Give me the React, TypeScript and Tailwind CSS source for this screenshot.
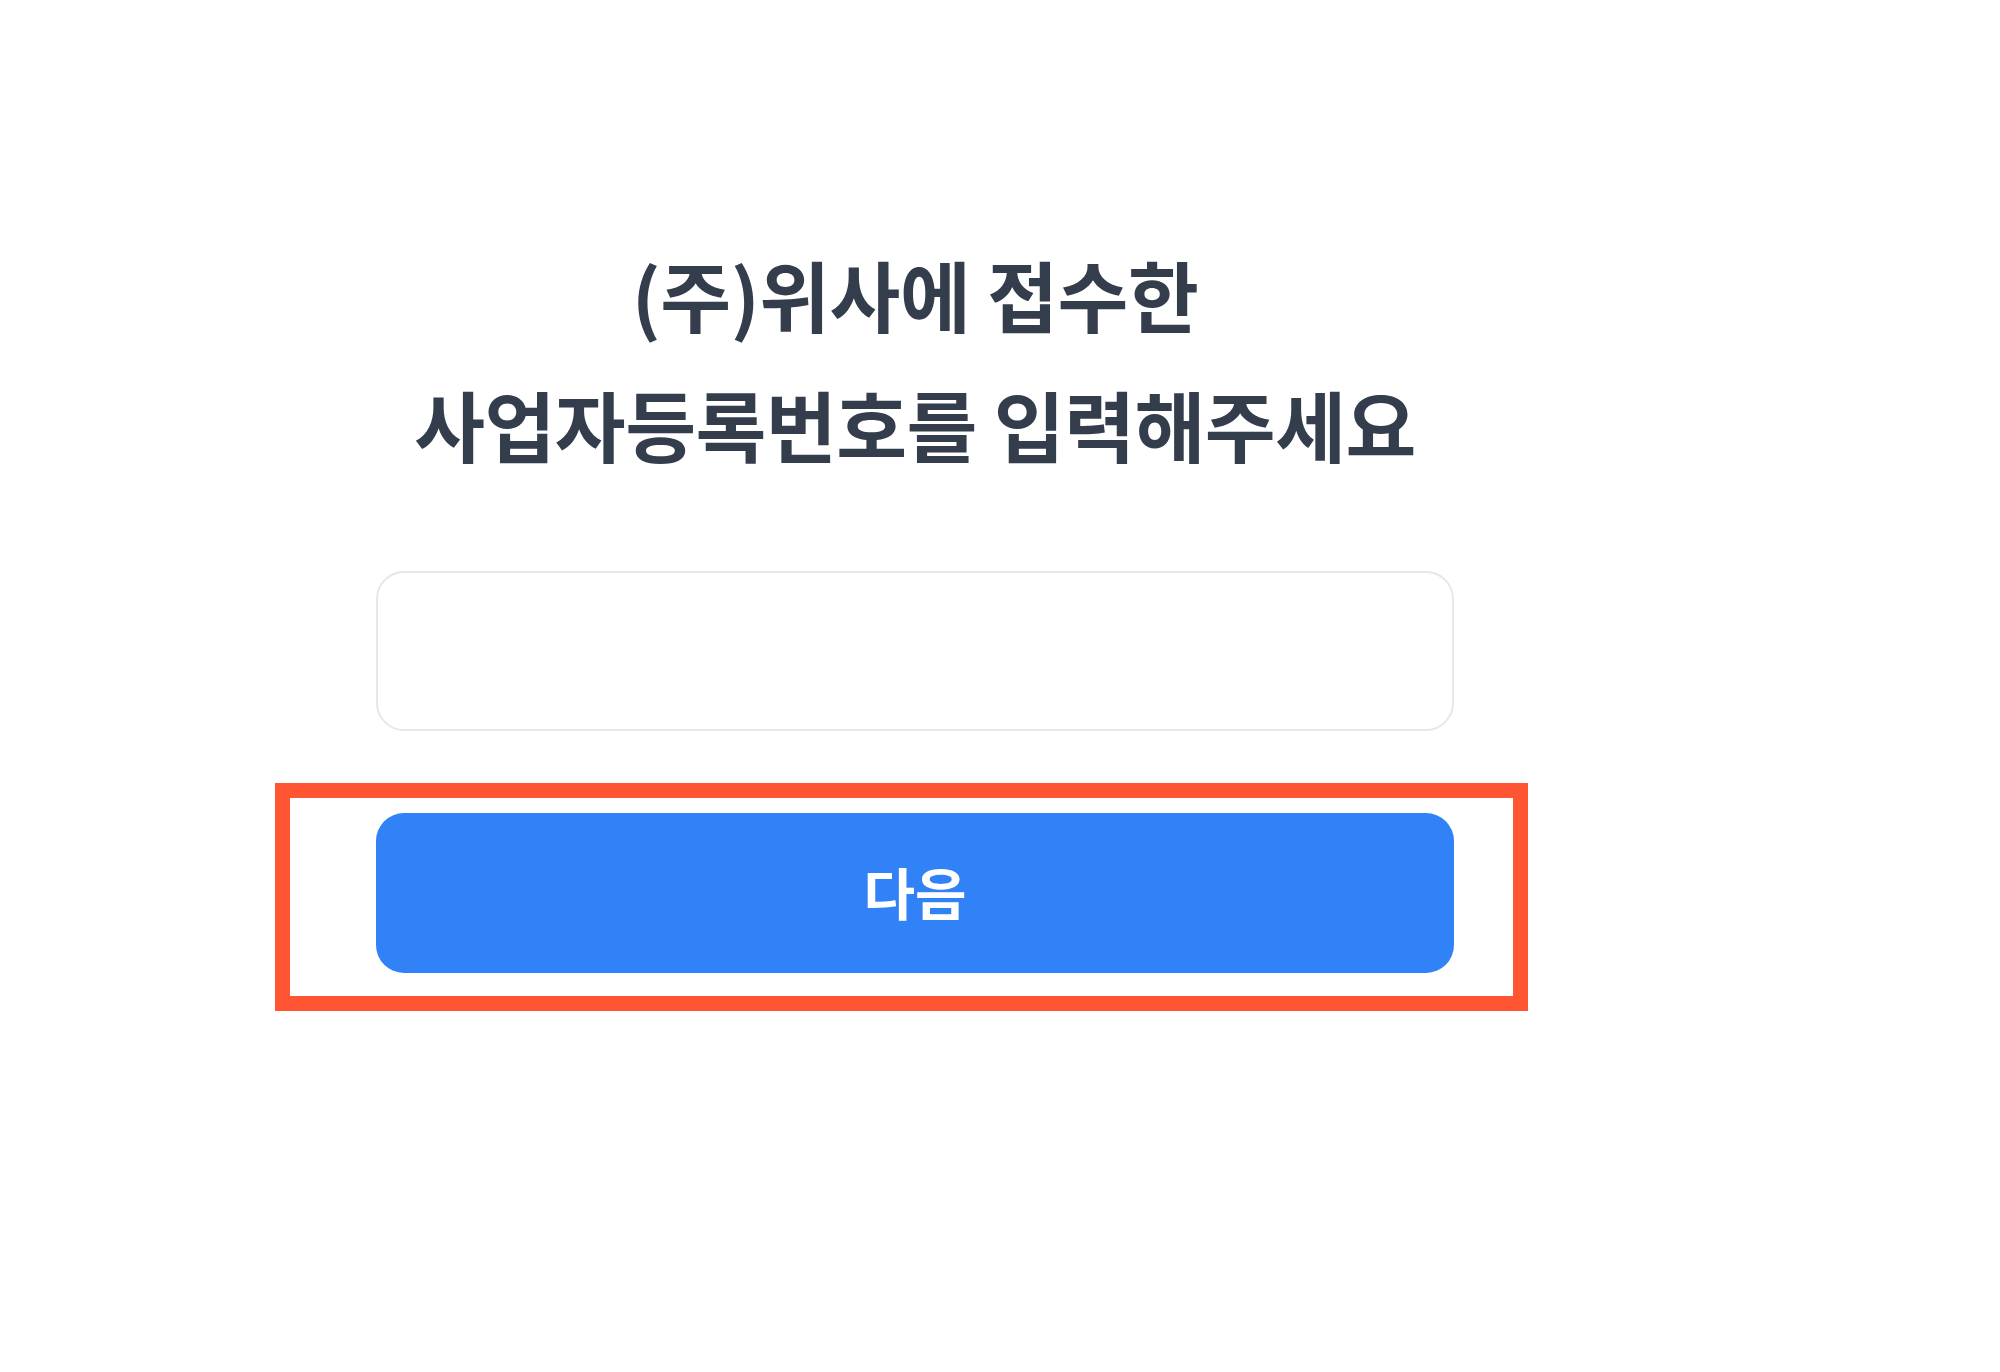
export default function App() {
  return (
    <div className="relative min-h-[1372px] w-full bg-white font-['Noto_Sans_CJK_KR','Noto_Sans',sans-serif]">
      <div className="ml-[376px] flex w-[1078px] flex-col pt-[229px]">
        <h1 className="text-center text-[77px] font-bold leading-[130px] tracking-[-0.5px] text-[#333d4b]">
          (주)위사에 접수한
          <br />
          사업자등록번호를 입력해주세요
        </h1>

        <input
          type="text"
          className="mt-[82px] h-[160px] w-full rounded-[28px] border-2 border-[#e6e7ea] bg-white px-8 text-[48px] outline-none"
        />

        <div className="relative mt-[82px]">
          <button className="h-[160px] w-full rounded-[28px] bg-[#3182f6] pb-1 text-[56px] font-bold text-white">
            다음
          </button>
          {/* annotation box */}
          <div className="pointer-events-none absolute left-[-101px] top-[-30px] h-[228px] w-[1253px] border-[15px] border-[#ff5533]" />
        </div>
      </div>
    </div>
  )
}
